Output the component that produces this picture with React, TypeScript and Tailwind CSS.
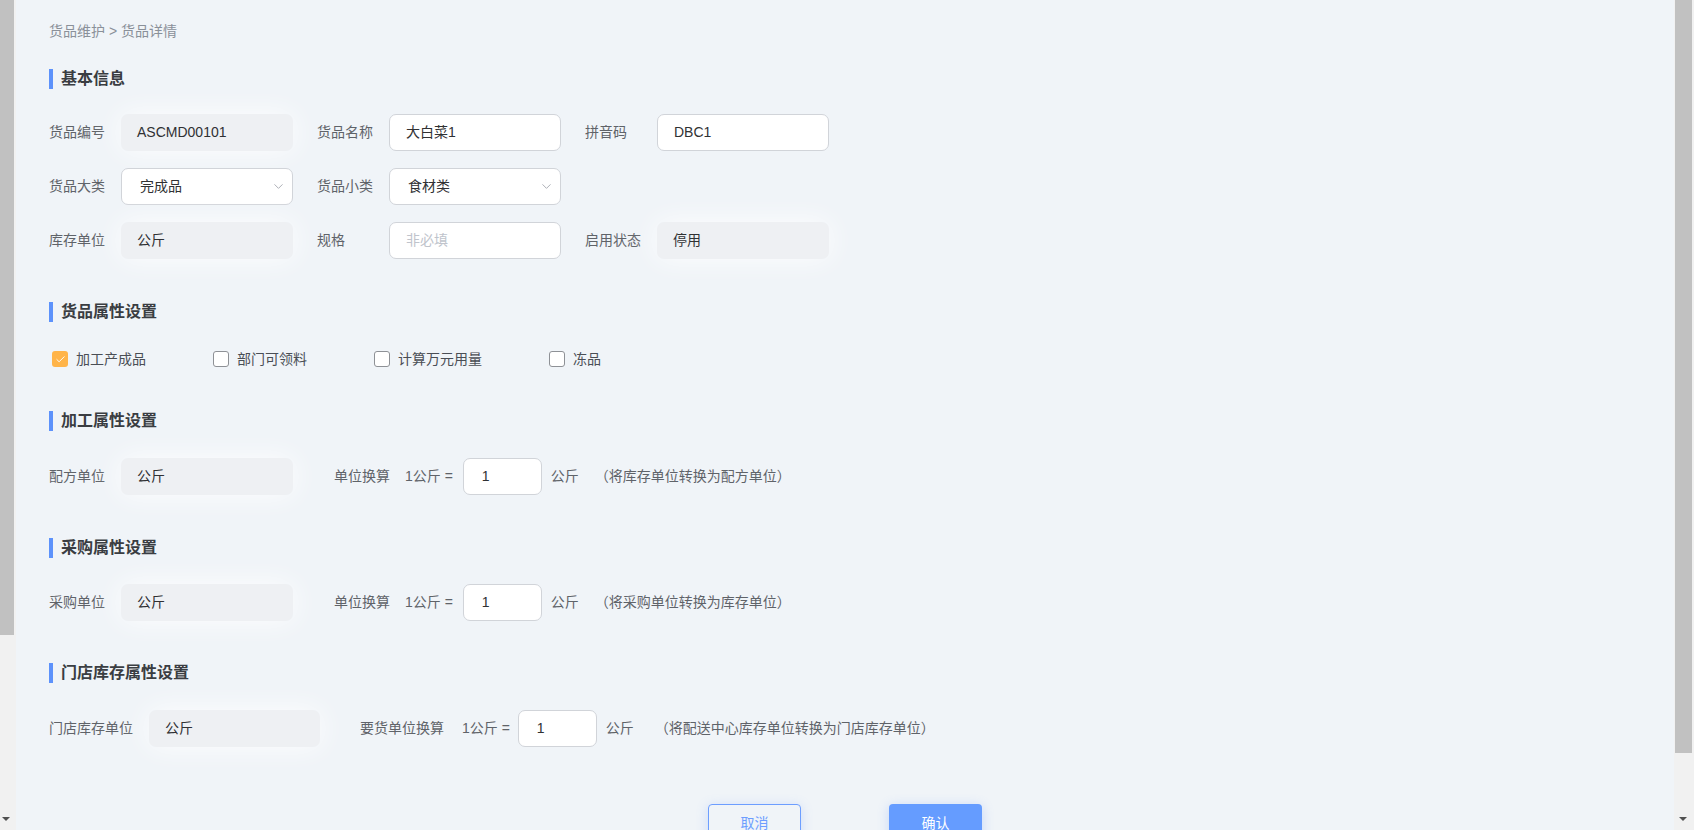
import type { FC, ReactNode } from 'react';
import { ChevronDown, Check } from 'lucide-react';

const font = "font-['Liberation_Sans','Noto_Sans_CJK_SC',sans-serif]";

const SectionTitle: FC<{ title: string; className?: string }> = ({ title, className }) => (
  <div className={`flex h-[20px] items-center ${className ?? ''}`}>
    <span className="h-[20px] w-[4px] bg-[#5d92fb]" />
    <span className="ml-[8px] text-[16px] font-semibold text-[#3a3d42]">{title}</span>
  </div>
);

const ReadBox: FC<{ value: string; width?: string }> = ({ value, width = 'w-[172px]' }) => (
  <div
    className={`${width} flex h-[37px] items-center rounded-[7px] bg-[#eef0f3] px-[16px] text-[14px] text-[#303133] shadow-[0_0_28px_rgba(255,255,255,0.9)]`}
  >
    {value}
  </div>
);

const InputBox: FC<{ value?: string; placeholder?: string }> = ({ value, placeholder }) => (
  <div className="flex h-[37px] w-[172px] items-center rounded-[7px] border border-[#d1d4d9] bg-white px-[16px] text-[14px]">
    {value ? (
      <span className="text-[#303133]">{value}</span>
    ) : (
      <span className="text-[#c0c4cc]">{placeholder}</span>
    )}
  </div>
);

const SelectBox: FC<{ value: string }> = ({ value }) => (
  <div className="flex h-[37px] w-[172px] items-center justify-between rounded-[7px] border border-[#d1d4d9] bg-white pl-[18px] pr-[6px] text-[14px] text-[#303133]">
    <span>{value}</span>
    <ChevronDown className="h-[15px] w-[15px] text-[#a8abb2]" strokeWidth={1.5} />
  </div>
);

const Field: FC<{ label: string; children: ReactNode }> = ({ label, children }) => (
  <div className="flex items-center">
    <span className="w-[72px] text-[14px] text-[#5f6369]">{label}</span>
    {children}
  </div>
);

const CheckItem: FC<{ label: string; checked?: boolean }> = ({ label, checked }) => (
  <label className="mr-[67px] flex items-center">
    {checked ? (
      <span className="flex h-[16px] w-[16px] items-center justify-center rounded-[3px] bg-[#ffb449]">
        <Check className="h-[11px] w-[11px] text-white" strokeWidth={2} />
      </span>
    ) : (
      <span className="h-[16px] w-[16px] rounded-[3px] border border-[#8e9196] bg-white" />
    )}
    <span className="ml-[8px] text-[14px] text-[#4a4e55]">{label}</span>
  </label>
);

const SmallInput: FC<{ width: string }> = ({ width }) => (
  <div
    className={`${width} flex h-[37px] items-center rounded-[7px] border border-[#d1d4d9] bg-white pl-[18px] text-[14px] text-[#303133]`}
  >
    1
  </div>
);

export default function App() {
  return (
    <div className={`flex h-[830px] w-[1694px] overflow-hidden bg-[#f1f1f1] ${font}`}>
      {/* left scrollbar */}
      <div className="flex w-[16px] flex-col bg-[#f1f1f1]">
        <div className="h-[635px] w-[14px] bg-[#c1c1c1]" />
        <div className="flex-1" />
        <div className="mb-[9px] ml-[2px] h-0 w-0 border-x-[4px] border-t-[4px] border-x-transparent border-t-[#505050]" />
      </div>

      {/* main */}
      <div className="flex w-[1658px] flex-col bg-[#f0f4f8]">
        <div className="h-[2px] bg-white shadow-[0_3px_12px_rgba(140,140,210,0.22)]" />
        <div className="pl-[33px]">
          <div className="mt-[21px] flex h-[20px] items-center text-[14px] text-[#8a9099]">
            货品维护 &gt; 货品详情
          </div>

          <SectionTitle title="基本信息" className="mt-[28px]" />
          <div className="mt-[25px] flex flex-col gap-[17px]">
            <div className="flex gap-[24px]">
              <Field label="货品编号"><ReadBox value="ASCMD00101" /></Field>
              <Field label="货品名称"><InputBox value="大白菜1" /></Field>
              <Field label="拼音码"><InputBox value="DBC1" /></Field>
            </div>
            <div className="flex gap-[24px]">
              <Field label="货品大类"><SelectBox value="完成品" /></Field>
              <Field label="货品小类"><SelectBox value="食材类" /></Field>
            </div>
            <div className="flex gap-[24px]">
              <Field label="库存单位"><ReadBox value="公斤" /></Field>
              <Field label="规格"><InputBox placeholder="非必填" /></Field>
              <Field label="启用状态"><ReadBox value="停用" /></Field>
            </div>
          </div>

          <SectionTitle title="货品属性设置" className="mt-[43px]" />
          <div className="mt-[27px] flex h-[20px] items-center pl-[3px]">
            <CheckItem label="加工产成品" checked />
            <CheckItem label="部门可领料" />
            <CheckItem label="计算万元用量" />
            <CheckItem label="冻品" />
          </div>

          <SectionTitle title="加工属性设置" className="mt-[42px]" />
          <div className="mt-[27px] flex items-center text-[14px] text-[#5f6369]">
            <span className="w-[72px]">配方单位</span>
            <ReadBox value="公斤" />
            <span className="ml-[41px]">单位换算</span>
            <span className="ml-[15px]">1公斤 =</span>
            <div className="ml-[10px]"><SmallInput width="w-[79px]" /></div>
            <span className="ml-[9px]">公斤</span>
            <span className="ml-[16px]">（将库存单位转换为配方单位）</span>
          </div>

          <SectionTitle title="采购属性设置" className="mt-[43px]" />
          <div className="mt-[26px] flex items-center text-[14px] text-[#5f6369]">
            <span className="w-[72px]">采购单位</span>
            <ReadBox value="公斤" />
            <span className="ml-[41px]">单位换算</span>
            <span className="ml-[15px]">1公斤 =</span>
            <div className="ml-[10px]"><SmallInput width="w-[79px]" /></div>
            <span className="ml-[9px]">公斤</span>
            <span className="ml-[16px]">（将采购单位转换为库存单位）</span>
          </div>

          <SectionTitle title="门店库存属性设置" className="mt-[42px]" />
          <div className="mt-[27px] flex items-center text-[14px] text-[#5f6369]">
            <span className="w-[100px]">门店库存单位</span>
            <ReadBox value="公斤" width="w-[171px]" />
            <span className="ml-[40px]">要货单位换算</span>
            <span className="ml-[18px]">1公斤 =</span>
            <div className="ml-[8px]"><SmallInput width="w-[79px]" /></div>
            <span className="ml-[9px]">公斤</span>
            <span className="ml-[21px]">（将配送中心库存单位转换为门店库存单位）</span>
          </div>
        </div>

        <div className="mt-[57px] flex justify-center gap-[88px]">
          <button className="h-[38px] w-[93px] rounded-[4px] border border-[#6d9eff] text-[14px] text-[#6d9eff] shadow-[0_2px_12px_rgba(100,150,255,0.25)]">
            取消
          </button>
          <button className="h-[38px] w-[93px] rounded-[4px] bg-[#659cff] text-[14px] text-white shadow-[0_2px_12px_rgba(100,150,255,0.3)]">
            确认
          </button>
        </div>
      </div>

      {/* right scrollbar */}
      <div className="flex w-[20px] flex-col bg-[#f1f1f1]">
        <div className="ml-[1px] h-[753px] w-[17px] bg-[#c1c1c1]" />
        <div className="flex-1" />
        <div className="mb-[9px] ml-[5px] h-0 w-0 border-x-[4px] border-t-[4px] border-x-transparent border-t-[#505050]" />
      </div>
    </div>
  );
}
